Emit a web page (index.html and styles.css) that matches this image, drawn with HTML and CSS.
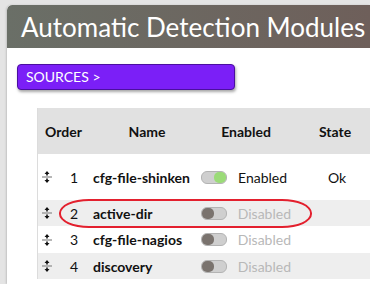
FILE: index.html
```html
<!DOCTYPE html>
<html>
<head>
<meta charset="utf-8">
<link rel="stylesheet" href="styles.css">
</head>
<body>
<div class="panel">
  <div class="panel-head"><h1 class="title">Automatic Detection Modules</h1></div>
  <div class="panel-body">
    <div class="crumb">SOURCES &gt;</div>
    <div class="table">
      <div class="row head">
        <div class="c c-order">Order</div>
        <div class="c c-name">Name</div>
        <div class="c c-en">Enabled</div>
        <div class="c c-state">State</div>
      </div>
      <div class="row first">
        <div class="c c-order"><svg class="sort" width="10" height="12" viewBox="0 0 10 12"><path d="M5 0 L7.5 3 L5.8 3 L5.8 4.5 L4.2 4.5 L4.2 3 L2.5 3 Z" fill="#111"/><rect x="0" y="5.3" width="10" height="1.4" fill="#999"/><path d="M5 12 L7.5 9 L5.8 9 L5.8 7.5 L4.2 7.5 L4.2 9 L2.5 9 Z" fill="#111"/></svg><span class="num">1</span></div>
        <div class="c c-name b">cfg-file-shinken</div>
        <div class="c c-en"><span class="tog on"><i></i></span><span class="lab">Enabled</span></div>
        <div class="c c-state">Ok</div>
      </div>
      <div class="row alt">
        <div class="c c-order"><svg class="sort" width="10" height="12" viewBox="0 0 10 12"><path d="M5 0 L7.5 3 L5.8 3 L5.8 4.5 L4.2 4.5 L4.2 3 L2.5 3 Z" fill="#111"/><rect x="0" y="5.3" width="10" height="1.4" fill="#999"/><path d="M5 12 L7.5 9 L5.8 9 L5.8 7.5 L4.2 7.5 L4.2 9 L2.5 9 Z" fill="#111"/></svg><span class="num">2</span></div>
        <div class="c c-name b">active-dir</div>
        <div class="c c-en"><span class="tog off"><i></i></span><span class="lab dis">Disabled</span></div>
        <div class="c c-state"></div>
        <div class="mark"></div>
      </div>
      <div class="row">
        <div class="c c-order"><svg class="sort" width="10" height="12" viewBox="0 0 10 12"><path d="M5 0 L7.5 3 L5.8 3 L5.8 4.5 L4.2 4.5 L4.2 3 L2.5 3 Z" fill="#111"/><rect x="0" y="5.3" width="10" height="1.4" fill="#999"/><path d="M5 12 L7.5 9 L5.8 9 L5.8 7.5 L4.2 7.5 L4.2 9 L2.5 9 Z" fill="#111"/></svg><span class="num">3</span></div>
        <div class="c c-name b">cfg-file-nagios</div>
        <div class="c c-en"><span class="tog off"><i></i></span><span class="lab dis">Disabled</span></div>
        <div class="c c-state"></div>
      </div>
      <div class="row alt">
        <div class="c c-order"><svg class="sort" width="10" height="12" viewBox="0 0 10 12"><path d="M5 0 L7.5 3 L5.8 3 L5.8 4.5 L4.2 4.5 L4.2 3 L2.5 3 Z" fill="#111"/><rect x="0" y="5.3" width="10" height="1.4" fill="#999"/><path d="M5 12 L7.5 9 L5.8 9 L5.8 7.5 L4.2 7.5 L4.2 9 L2.5 9 Z" fill="#111"/></svg><span class="num">4</span></div>
        <div class="c c-name b">discovery</div>
        <div class="c c-en"><span class="tog off"><i></i></span><span class="lab dis">Disabled</span></div>
        <div class="c c-state"></div>
      </div>
    </div>
  </div>
</div>
</body>
</html>
```
FILE: styles.css
```css
html, body { margin: 0; padding: 0; }
html { overflow: hidden; }
body {
  background: #e4e4e4;
  font-family: Lato, "Liberation Sans", sans-serif;
  width: 370px;
  height: 284px;
  overflow: hidden;
  padding: 5px 0 0 7px;
  box-sizing: border-box;
}
.panel {
  width: 363px;
  height: 279px;
  overflow: hidden;
  background: #fff;
  border-radius: 5px 0 0 0;
  box-shadow: -1px 0 2px rgba(0,0,0,0.15);
}
.panel-head {
  height: 43px;
  background: linear-gradient(to right, #6a6f67, #6e5f5a);
  border-radius: 5px 0 0 0;
  display: flex;
  align-items: center;
  overflow: hidden;
}
.title {
  margin: 0 0 0 14px;
  color: #fff;
  font-weight: 400;
  font-size: 26px;
  line-height: 30px;
  white-space: nowrap;
}
.panel-body { padding: 16px 0 0 10px; }
.crumb {
  width: 216px;
  height: 24px;
  background: #7b1ff7;
  border: 1px solid #4b0fa0;
  border-radius: 4px;
  box-shadow: 1px 2px 3px rgba(0,0,0,0.35);
  color: #fff;
  font-size: 14px;
  line-height: 24px;
  text-indent: 8px;
}
.table {
  margin: 18px 0 0 20px;
  border-left: 1px solid #dcdcdc;
}
.row {
  display: grid;
  grid-template-columns: 51px 112px 90px 79px;
  align-items: center;
  height: 27px;
  position: relative;
  font-size: 14px;
  color: #111;
}
.row.head {
  height: 46px;
  background: #e1e1e1;
  font-weight: 700;
}
.row.first { height: 46px; }
.row.alt { background: #eeeeee; height: 26px; }
.head .c { text-align: center; }
.c-order { display: flex; align-items: center; padding-left: 4px; }
.head .c-order { display: block; padding-left: 0; }
.sort { display: block; }
.num { margin-left: 18px; }
.c-name { padding-left: 4px; }
.b { font-weight: 700; }
.c-en { display: flex; align-items: center; }
.head .c-en { display: block; }
.c-state { padding-left: 37px; }
.head .c-state { text-align: left; padding-left: 28px; }
.tog {
  width: 24px;
  height: 11px;
  border: 1px solid #b3b3b3;
  border-radius: 6px;
  background: #cfcfcf;
  position: relative;
  display: block;
}
.tog i {
  position: absolute;
  top: 0;
  width: 12px;
  height: 11px;
  border-radius: 5px;
}
.tog.on i { right: 0; background: #9bdb78; }
.tog.off i { left: 0; background: #7a736e; }
.lab { margin-left: 11px; }
.lab.dis { color: #b8b8b8; }
.mark {
  position: absolute;
  left: 21px;
  top: -1px;
  width: 249px;
  height: 25px;
  border: 2px solid #e3202e;
  border-radius: 30px / 14px;
}
```
